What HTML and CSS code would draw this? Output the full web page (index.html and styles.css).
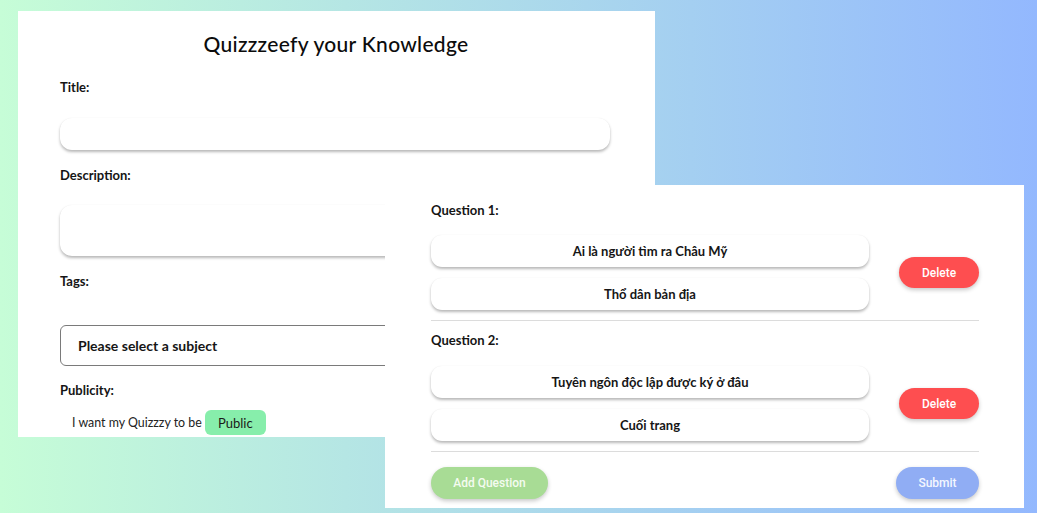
FILE: index.html
```html
<!DOCTYPE html>
<html>
<head>
<meta charset="utf-8">
<link rel="stylesheet" href="styles.css">
</head>
<body>
<div class="stage">
  <section class="card card-main">
    <h1 class="heading">Quizzzeefy your Knowledge</h1>
    <label class="label l-title">Title:</label>
    <div class="input input-title"></div>
    <label class="label l-desc">Description:</label>
    <div class="input input-desc"></div>
    <label class="label l-tags">Tags:</label>
    <div class="select">Please select a subject</div>
    <label class="label l-pub">Publicity:</label>
    <div class="pub-row">
      <span class="pub-text">I want my Quizzzy to be</span>
      <span class="pub-btn">Public</span>
    </div>
  </section>

  <section class="card card-questions">
    <div class="question q1">
      <div class="q-label">Question 1:</div>
      <div class="q-body">
        <div class="answers">
          <div class="answer">Ai là người tìm ra Châu Mỹ</div>
          <div class="answer">Thổ dân bản địa</div>
        </div>
        <button class="btn btn-delete">Delete</button>
      </div>
    </div>
    <hr class="divider">
    <div class="question q2">
      <div class="q-label">Question 2:</div>
      <div class="q-body">
        <div class="answers">
          <div class="answer">Tuyên ngôn độc lập được ký ở đâu</div>
          <div class="answer">Cuối trang</div>
        </div>
        <button class="btn btn-delete">Delete</button>
      </div>
    </div>
    <hr class="divider">
    <div class="actions">
      <button class="btn btn-add">Add Question</button>
      <button class="btn btn-submit">Submit</button>
    </div>
  </section>
</div>
</body>
</html>
```

FILE: styles.css
```css
* { box-sizing: border-box; }
html, body {
  margin: 0;
  padding: 0;
}
body {
  width: 1037px;
  height: 513px;
  overflow: hidden;
  background: linear-gradient(to right, #c6fdd7, #93b8fe);
  font-family: "Lato", "Noto Sans", sans-serif;
  color: #111;
}
.stage {
  position: relative;
  width: 1037px;
  height: 513px;
  padding: 11px 0 0 18px;
}
.card {
  background: #fff;
}
.card-main {
  width: 637px;
  height: 426px;
  padding: 0 45px 0 42px;
  display: flex;
  flex-direction: column;
}
.heading {
  margin: 20px 0 0;
  font-size: 21px;
  line-height: 26px;
  font-weight: 500;
  text-align: center;
  letter-spacing: 0.3px;
  padding-left: 2px;
  color: #0c0c0c;
}
.label {
  display: block;
  font-size: 13px;
  line-height: 16px;
  font-weight: 700;
  color: #151515;
}
.l-title { margin-top: 22px; }
.l-desc { margin-top: 17px; }
.l-tags { margin-top: 17px; }
.l-pub { margin-top: 16px; }
.input {
  width: 550px;
  background: #fff;
  border-radius: 12px;
  box-shadow: 0 2px 3px rgba(0,0,0,0.28), 0 0 1px rgba(0,0,0,0.06);
}
.input-title { margin-top: 23px; height: 32px; }
.input-desc { margin-top: 22px; height: 51px; }
.select {
  margin-top: 36px;
  width: 550px;
  height: 41px;
  border: 1px solid #7a7a7a;
  border-radius: 6px;
  padding-left: 17px;
  display: flex;
  align-items: center;
  font-size: 14px;
  font-weight: 700;
  color: #161616;
}
.pub-row {
  margin-top: 12px;
  padding-left: 12px;
  display: flex;
  align-items: center;
  height: 25px;
}
.pub-text {
  font-size: 12.4px;
  color: #222;
  margin-right: 3px;
}
.pub-btn {
  width: 61px;
  height: 25px;
  background: #87eeab;
  border-radius: 6px;
  display: flex;
  align-items: center;
  justify-content: center;
  font-size: 13px;
  color: #1a1a1a;
}

.card-questions {
  position: absolute;
  left: 385px;
  top: 185px;
  width: 639px;
  height: 323px;
  padding: 17px 45px 0 46px;
}
.q-label {
  font-size: 13px;
  line-height: 16px;
  font-weight: 700;
  color: #151515;
}
.q-body {
  margin-top: 17px;
  display: flex;
  align-items: center;
  justify-content: space-between;
}
.q2 { margin-top: 11px; }
.q2 .q-body { margin-top: 18px; }
.answers {
  width: 438px;
  display: flex;
  flex-direction: column;
  gap: 11px;
}
.answer {
  height: 32px;
  border-radius: 11px;
  background: #fff;
  box-shadow: 0 2px 3px rgba(0,0,0,0.28), 0 0 1px rgba(0,0,0,0.06);
  display: flex;
  align-items: center;
  justify-content: center;
  padding-bottom: 1px;
  font-size: 13px;
  font-weight: 700;
  color: #161616;
}
.divider {
  margin: 10px 0 0;
  border: 0;
  height: 1px;
  background: #dcdcdc;
}
.btn {
  border: 0;
  height: 31px;
  border-radius: 16px;
  font-family: "Roboto", sans-serif;
  font-weight: 500;
  font-size: 12px;
  color: #fff;
  box-shadow: 0 2px 4px rgba(0,0,0,0.22);
  padding: 0;
}
.btn-delete {
  width: 80px;
  background: #fe4e50;
}
.actions {
  margin-top: 15px;
  display: flex;
  justify-content: space-between;
}
.actions .btn { height: 32px; }
.btn-add {
  width: 117px;
  background: #a8dc95;
  color: #f4fbf0;
}
.btn-submit {
  width: 83px;
  background: #90adf4;
  color: #f4f7ff;
}
```
